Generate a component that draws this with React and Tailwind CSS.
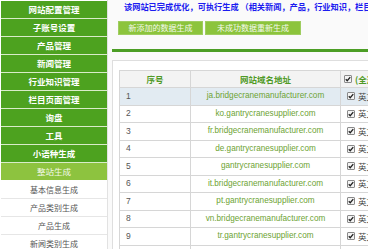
const menu = [
  { name: "网站配置管理", type: "main" },
  { name: "子账号设置", type: "main" },
  { name: "产品管理", type: "main" },
  { name: "新闻管理", type: "main" },
  { name: "行业知识管理", type: "main" },
  { name: "栏目页面管理", type: "main" },
  { name: "询盘", type: "main" },
  { name: "工具", type: "main" },
  { name: "小语种生成", type: "main" },
  { name: "整站生成", type: "active" },
  { name: "基本信息生成", type: "sub" },
  { name: "产品类别生成", type: "sub" },
  { name: "产品生成", type: "sub" },
  { name: "新闻类别生成", type: "sub" },
];

const sites = [
  "ja.bridgecranemanufacturer.com",
  "ko.gantrycranesupplier.com",
  "fr.bridgecranemanufacturer.com",
  "de.gantrycranesupplier.com",
  "gantrycranesupplier.com",
  "it.bridgecranemanufacturer.com",
  "pt.gantrycranesupplier.com",
  "vn.bridgecranemanufacturer.com",
  "tr.gantrycranesupplier.com",
  "es.bridgecranemanufacturer.com",
];

function Check() {
  return (
    <span className="inline-flex items-center justify-center w-[8px] h-[8px] border border-[#8a8a8a] bg-[#f4f4f4] rounded-[1px] mr-[3px]">
      <svg width="6" height="6" viewBox="0 0 8 8">
        <path d="M1 4.2 L3 6.2 L7 1.5" fill="none" stroke="#222" strokeWidth="1.8" />
      </svg>
    </span>
  );
}

export default function App() {
  return (
    <div
      className="flex w-[368px] h-[249px] overflow-hidden bg-white"
      style={{ fontFamily: '"Noto Sans CJK SC", "Liberation Sans", sans-serif' }}
    >
      <div className="w-[108px] shrink-0 pl-px pt-px border-r border-[#e2e2e2]">
        {menu.map((m) => (
          <div
            key={m.name}
            className={
              m.type === "main"
                ? "h-[18px] flex items-center justify-center bg-[#4da21f] text-white text-[8.5px] font-bold border-b border-[#d9ecc9]"
                : m.type === "active"
                ? "h-[18px] flex items-center justify-center bg-[#8dc33f] text-[#f2f8e8] text-[8.5px] border-b border-white"
                : "h-[18px] flex items-center justify-center bg-white text-[#555] text-[8px] border-b border-[#e6e6e6]"
            }
          >
            {m.name}
          </div>
        ))}
      </div>

      <div className="flex-1 min-w-0 bg-[#fafafa] pl-[4px]">
        <div className="h-[12px] pl-[12px] text-[8.2px] font-bold text-[#1c1cf0] whitespace-nowrap leading-[12px] overflow-hidden">
          该网站已完成优化，可执行生成 （相关新闻，产品，行业知识，栏目页面）
        </div>
        <div className="flex gap-[2px] mt-[9px] pl-[6px]">
          <div className="w-[85px] h-[14px] flex items-center justify-center bg-[#8cc43c] border border-[#9fcd60] text-[8px] text-[#f4f9ec]">
            新添加的数据生成
          </div>
          <div className="w-[96px] h-[14px] flex items-center justify-center bg-[#8cc43c] border border-[#9fcd60] text-[8px] text-[#f4f9ec]">
            未成功数据重新生成
          </div>
        </div>
        <div className="mt-[14px] h-[3px] bg-[#4c9e25]" />
        <div className="mt-[8px] border-t border-l border-[#dedede] bg-white pl-[6px] pt-[9px] h-[200px] overflow-hidden">
          <div className="w-[300px] border-t border-l border-[#d6d6d6] text-[8.2px]">
            <div className="flex h-[17px] bg-[#f3f3f3] border-b border-[#d6d6d6]">
              <div className="w-[71px] border-r border-[#d6d6d6] flex items-center justify-center font-bold text-[#4f9a26] text-[8.5px]">
                序号
              </div>
              <div className="w-[150px] border-r border-[#d6d6d6] flex items-center justify-center font-bold text-[#4f9a26] text-[8.5px]">
                网站域名地址
              </div>
              <div className="flex-1 flex items-center pl-[3px] font-bold text-[#4f9a26] text-[8.5px] whitespace-nowrap">
                <Check />
                (全选)
              </div>
            </div>
            {sites.map((s, i) => (
              <div
                key={s}
                className={
                  "flex h-[17.5px] border-b border-[#d6d6d6] " +
                  (i === 0 ? "bg-[#e2ebf2]" : "bg-white")
                }
              >
                <div
                  className="w-[71px] border-r border-[#d6d6d6] flex items-center pl-[6px] text-[#555] text-[8.5px]"
                  style={{ fontFamily: '"Liberation Sans", sans-serif' }}
                >
                  {i + 1}
                </div>
                <div
                  className="w-[150px] border-r border-[#d6d6d6] flex items-center justify-center text-[#6da333] whitespace-nowrap"
                  style={{ fontFamily: '"Liberation Sans", sans-serif' }}
                >
                  {s}
                </div>
                <div className="flex-1 flex items-center pl-[6px] text-[#444] text-[8.5px] whitespace-nowrap">
                  <Check />
                  英文
                </div>
              </div>
            ))}
          </div>
        </div>
      </div>
    </div>
  );
}
